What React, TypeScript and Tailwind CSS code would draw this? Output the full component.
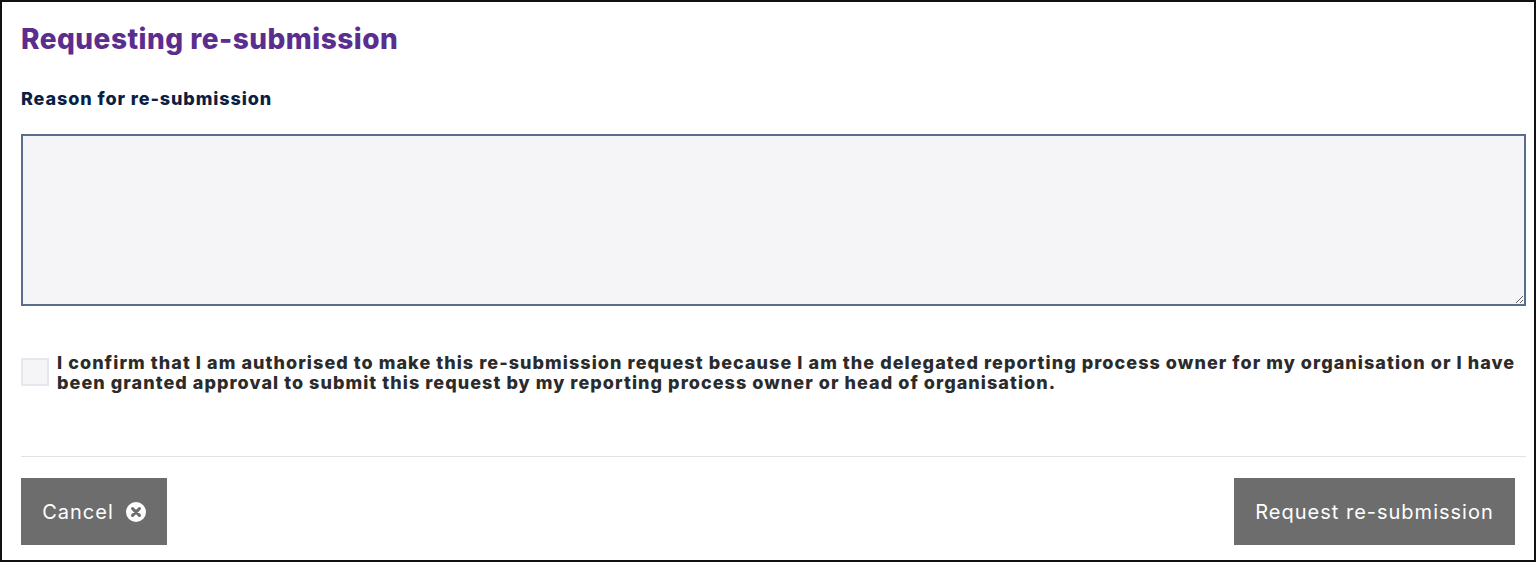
import React from "react";

function CancelIcon() {
  return (
    <svg width="20" height="20" viewBox="0 0 20 20" aria-hidden="true">
      <circle cx="10" cy="10" r="10" fill="#ffffff" />
      <path d="M6.6 6.6 L13.4 13.4 M13.4 6.6 L6.6 13.4" stroke="#6d6d6d" strokeWidth="3" strokeLinecap="round" />
    </svg>
  );
}

export default function App() {
  return (
    <div className="h-[562px] w-[1536px] border-2 border-[#111111] bg-white pl-[19px] pr-2 font-['Inter','Liberation_Sans',sans-serif] overflow-hidden flex flex-col">
      <h1 className="mt-[19px] h-[36px] text-[28px] leading-[36px] font-extrabold tracking-[0.48px] text-[#5b2d8e]">
        Requesting re-submission
      </h1>
      <label className="mt-[30px] h-[24px] text-[18px] leading-[24px] font-extrabold tracking-[0.9px] text-[#0b1f44]">
        Reason for re-submission
      </label>
      <textarea className="mt-[23px] h-[172px] w-full shrink-0 block border-2 border-[#5a6d8c] bg-[#f5f5f8] outline-none" />
      <div className="mt-[50px] flex items-start">
        <input type="checkbox" className="mt-[2px] h-[28px] w-[28px] shrink-0 appearance-none border-2 border-[#e4e7ee] bg-[#f5f5f8]" />
        <p className="ml-[8px] mt-[-3px] w-[1470px] text-[18px] leading-[20px] font-extrabold tracking-[1.05px] text-[#2b2b2b]">
          I confirm that I am authorised to make this re-submission request because I am the delegated reporting process owner for my organisation or I have been granted approval to submit this request by my reporting process owner or head of organisation.
        </p>
      </div>
      <div className="mt-[63px] h-px w-full shrink-0 bg-[#e2e2e2]" />
      <div className="mt-[21px] flex justify-between pr-[11px]">
        <button className="flex h-[67px] w-[146px] items-center justify-center gap-[12px] bg-[#6d6d6d] text-[20px] tracking-[1px] text-white">
          Cancel
          <CancelIcon />
        </button>
        <button className="flex h-[67px] w-[281px] items-center justify-center bg-[#6d6d6d] text-[20px] tracking-[1px] text-white">
          Request re-submission
        </button>
      </div>
    </div>
  );
}
